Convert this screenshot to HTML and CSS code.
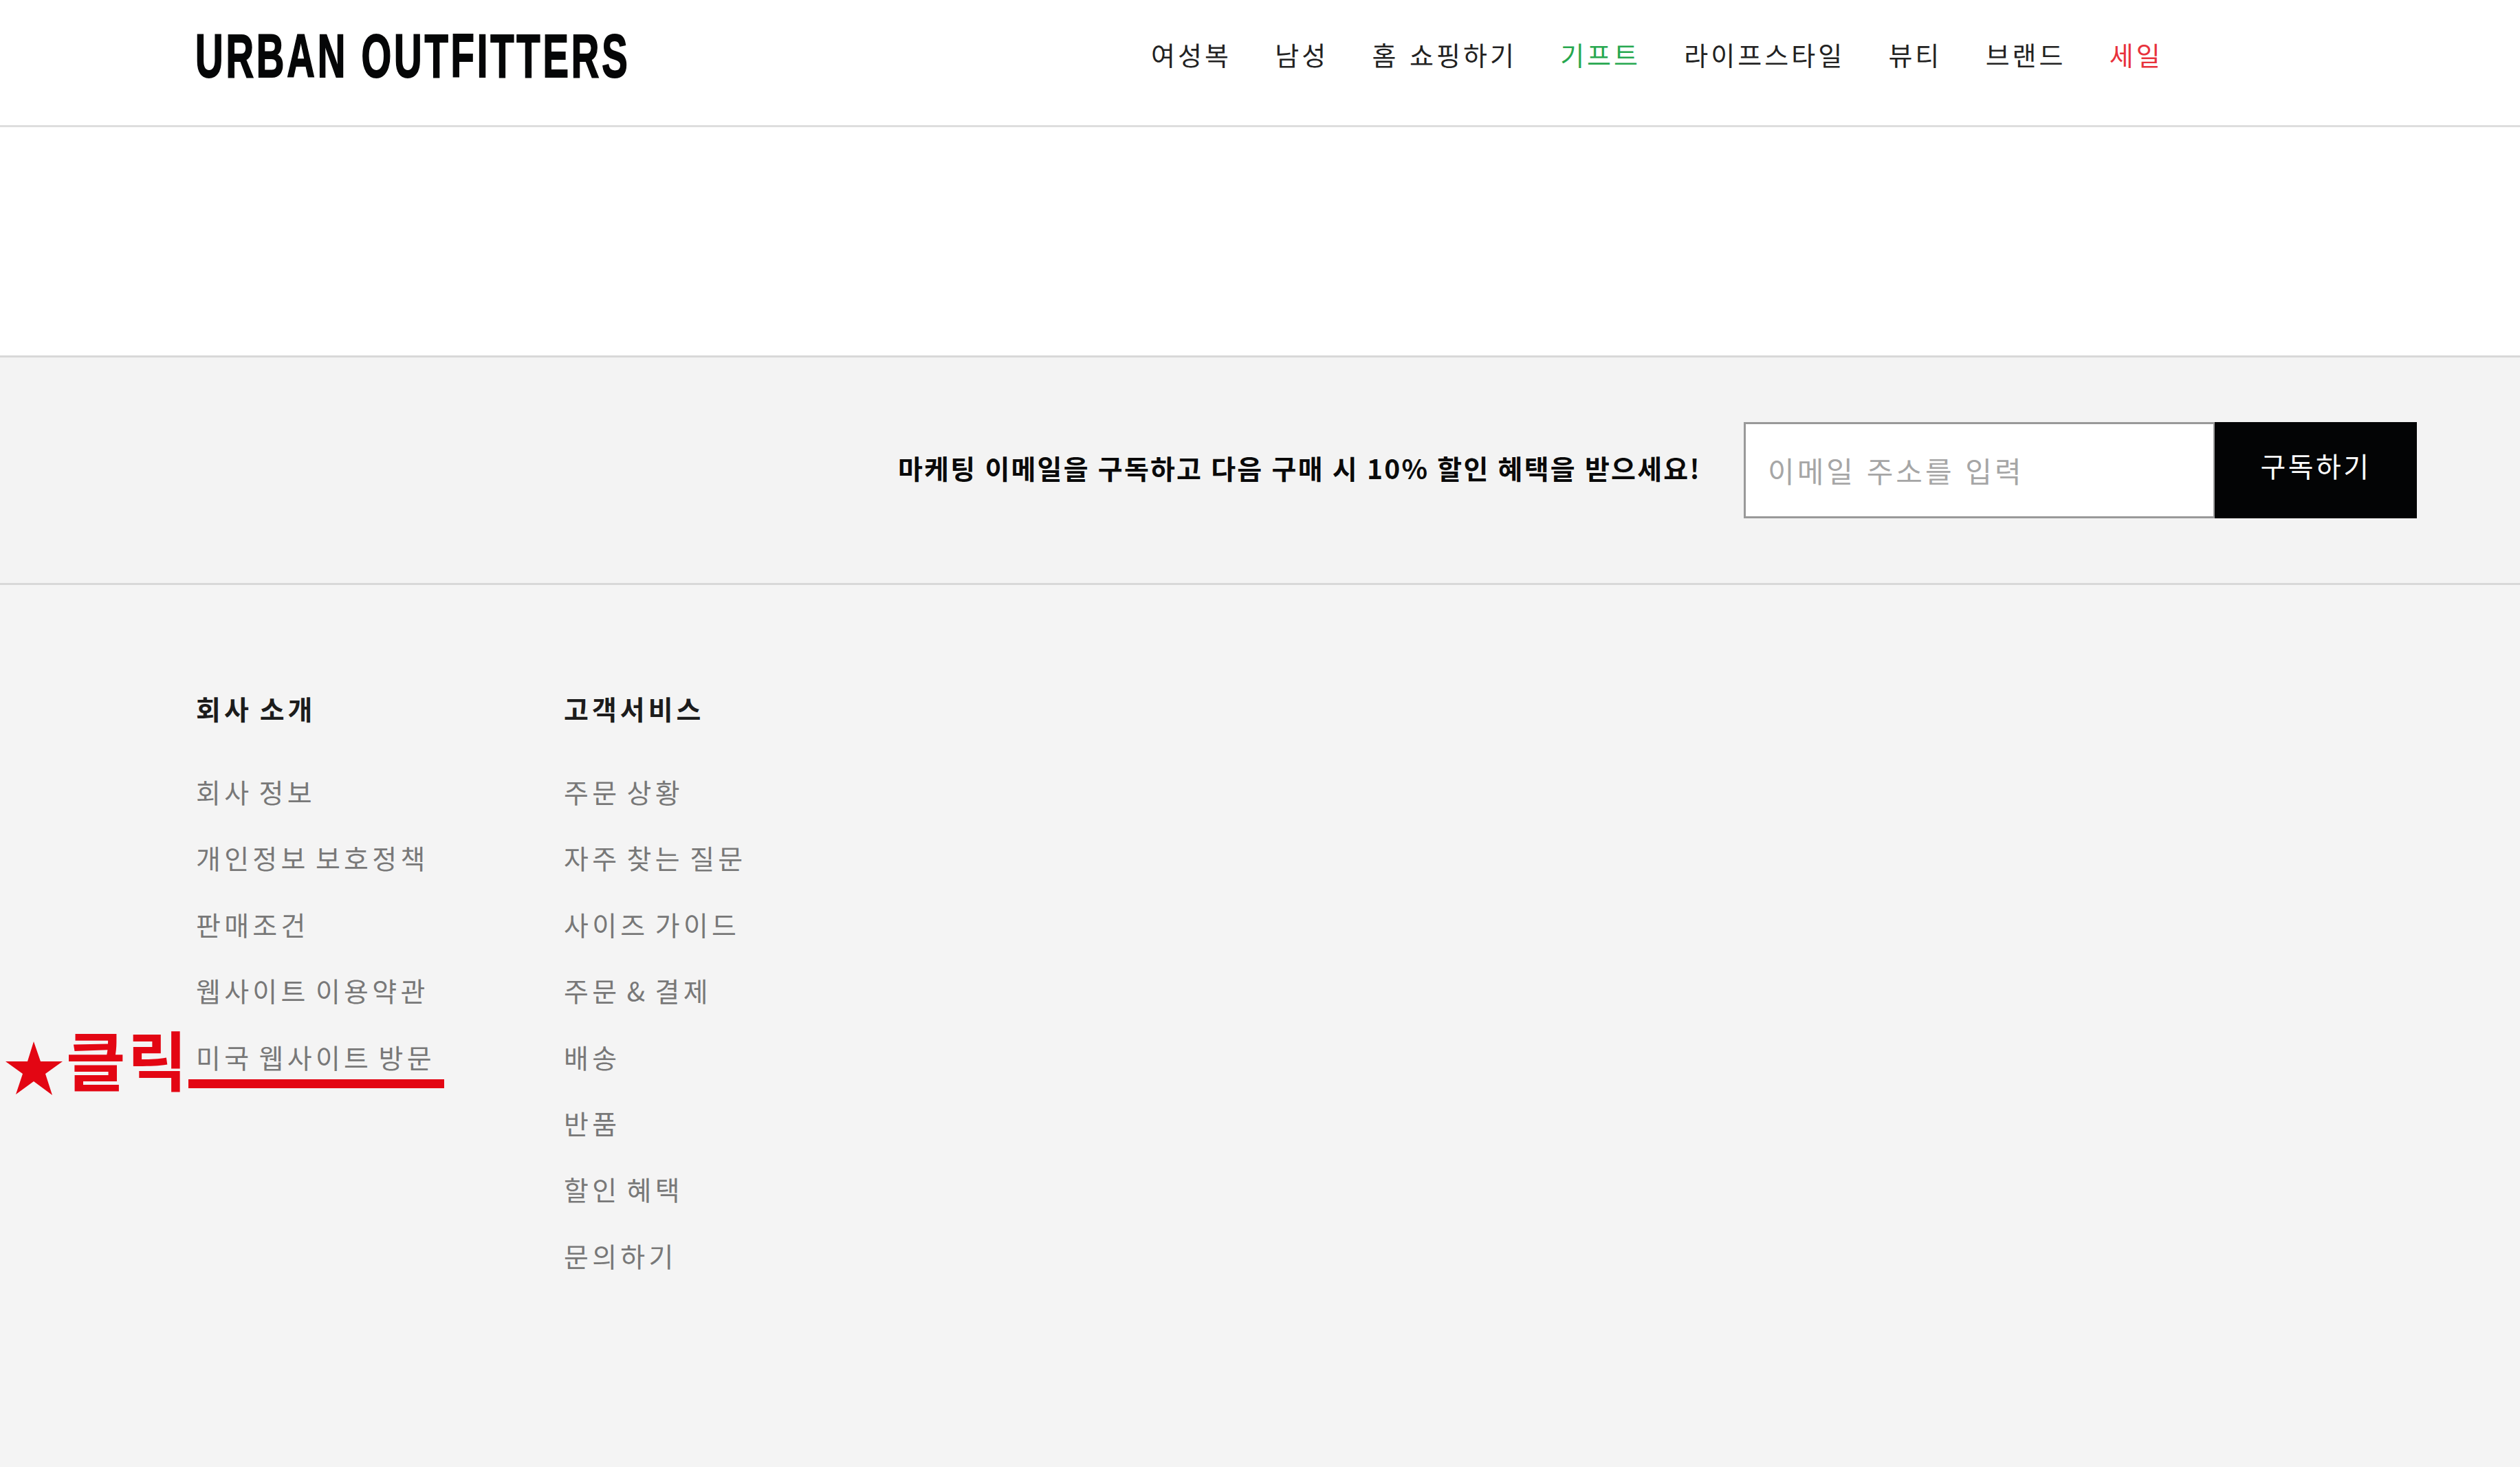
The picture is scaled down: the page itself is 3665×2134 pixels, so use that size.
FILE: index.html
```html
<!DOCTYPE html>
<html lang="ko">
<head>
  <meta charset="UTF-8" />
  <title>Urban Outfitters</title>
  <link rel="stylesheet" href="styles.css">
</head>
<body>
  <!-- Header -->
  <header class="site-header">
    <a class="logo" href="#"><span class="logo-text">URBAN OUTFITTERS</span></a>
    <nav class="nav">
      <a class="nav-link" href="#">여성복</a>
      <a class="nav-link" href="#">남성</a>
      <a class="nav-link" href="#">홈 쇼핑하기</a>
      <a class="nav-link nav-gift" href="#">기프트</a>
      <a class="nav-link" href="#">라이프스타일</a>
      <a class="nav-link" href="#">뷰티</a>
      <a class="nav-link" href="#">브랜드</a>
      <a class="nav-link nav-sale" href="#">세일</a>
    </nav>
  </header>

  <div class="blank-band"></div>

  <!-- Newsletter -->
  <section class="subscribe">
    <p class="subscribe-text">마케팅 이메일을 구독하고 다음 구매 시 10% 할인 혜택을 받으세요!</p>
    <form class="subscribe-form">
      <input class="subscribe-input" type="text" placeholder="이메일 주소를 입력" />
      <button class="subscribe-btn" type="button"><span class="subscribe-btn-label">구독하기</span></button>
    </form>
  </section>

  <!-- Footer -->
  <footer class="footer">
    <div class="footer-col">
      <h4 class="footer-title">회사 소개</h4>
      <ul class="footer-list">
        <li><a class="footer-link" href="#">회사 정보</a></li>
        <li><a class="footer-link" href="#">개인정보 보호정책</a></li>
        <li><a class="footer-link" href="#">판매조건</a></li>
        <li><a class="footer-link" href="#">웹사이트 이용약관</a></li>
        <li class="footer-marked">
          <a class="footer-link" href="#">미국 웹사이트 방문</a>
          <!-- annotation drawn on top of the screenshot -->
          <div class="click-note">
            <svg class="click-star" width="83" height="78" viewBox="0 0 83 78">
              <polygon points="41,0 51,29 83,29 58,47 68,78 41,58 15,77 25,47 0,29 32,29" />
            </svg>
            <span class="click-label">클릭</span>
          </div>
          <div class="click-line"></div>
        </li>
      </ul>
    </div>
    <div class="footer-col">
      <h4 class="footer-title">고객서비스</h4>
      <ul class="footer-list">
        <li><a class="footer-link" href="#">주문 상황</a></li>
        <li><a class="footer-link" href="#">자주 찾는 질문</a></li>
        <li><a class="footer-link" href="#">사이즈 가이드</a></li>
        <li><a class="footer-link" href="#">주문 &amp; 결제</a></li>
        <li><a class="footer-link" href="#">배송</a></li>
        <li><a class="footer-link" href="#">반품</a></li>
        <li><a class="footer-link" href="#">할인 혜택</a></li>
        <li><a class="footer-link" href="#">문의하기</a></li>
      </ul>
    </div>
  </footer>
</body>
</html>
```

FILE: styles.css
```css
body {
  margin: 0;
  min-height: 2134px;
  display: flex;
  flex-direction: column;
  background: #fff;
  font-family: "Noto Sans CJK KR", "Noto Sans", sans-serif;
}
a {
  text-decoration: none;
}
/* Header */
.site-header {
  height: 182px;
  display: flex;
  align-items: center;
  padding-left: 284px;
  border-bottom: 3px solid #dedede;
}
.logo {
  display: block;
  width: 627px;
  height: 90px;
  margin-top: -20px;
  color: #050607;
}
/* logo wordmark is a heavy condensed face, squeeze the bold sans to get there */
.logo-text {
  display: inline-block;
  font-family: "Liberation Sans", sans-serif;
  font-size: 89px;
  line-height: 90px;
  font-weight: 700;
  letter-spacing: 6px;
  white-space: nowrap;
  -webkit-text-stroke: 2px #050607;
  transform: scaleX(0.632);
  transform-origin: left center;
}
.nav {
  display: flex;
  gap: 63.3px;
  margin-left: 763px;
  margin-top: -24px;
}
.nav-link {
  font-size: 38px;
  line-height: 44px;
  letter-spacing: 4px;
  word-spacing: 1px;
  color: #222;
}
.nav-gift {
  color: #27a84f;
}
.nav-sale {
  color: #e8323c;
}
.blank-band {
  height: 332px;
}
/* Newsletter */
.subscribe {
  height: 328px;
  display: flex;
  align-items: center;
  justify-content: flex-end;
  gap: 62px;
  padding-right: 150px;
  background: #f3f3f3;
  border-top: 3px solid #d8d8d8;
  border-bottom: 3px solid #d8d8d8;
}
.subscribe-text {
  margin: -8px 0 0 0;
  font-size: 39px;
  line-height: 44px;
  font-weight: 700;
  letter-spacing: 2.2px;
  word-spacing: -1px;
  color: #0a0a0a;
}
.subscribe-form {
  display: flex;
}
.subscribe-input {
  width: 685px;
  height: 140px;
  box-sizing: border-box;
  padding: 0 32px 2px 32px;
  border: 3px solid #999;
  border-right-width: 2px;
  background: #fff;
  font-family: inherit;
  font-size: 42px;
  letter-spacing: 4px;
  outline: none;
}
.subscribe-input::placeholder {
  color: #a6a6a6;
}
.subscribe-btn {
  width: 294px;
  height: 140px;
  border: none;
  background: #030405;
  color: #fff;
  font-family: inherit;
  font-size: 40px;
  letter-spacing: 3.5px;
}
.subscribe-btn-label {
  display: block;
  margin-top: -14px;
}
/* Footer */
.footer {
  flex: 1;
  display: flex;
  gap: 235px;
  padding: 159px 0 0 285px;
  background: #f4f4f4;
}
.footer-col {
  width: 300px;
}
.footer-title {
  margin: 0 0 81px 0;
  font-size: 39px;
  line-height: 40px;
  font-weight: 700;
  letter-spacing: 5px;
  word-spacing: -5px;
  color: #1c1c1c;
}
.footer-list {
  list-style: none;
  margin: 0;
  padding: 0;
  display: flex;
  flex-direction: column;
  gap: 56.4px;
}
.footer-list li {
  height: 40px;
}
.footer-link {
  font-size: 39px;
  line-height: 40px;
  letter-spacing: 5.3px;
  word-spacing: -7px;
  color: #787878;
  white-space: nowrap;
}
.footer-marked {
  position: relative;
}
.click-note {
  position: absolute;
  left: -277px;
  top: -28px;
  display: flex;
  align-items: flex-start;
  gap: 5px;
}
.click-star {
  flex: none;
  margin-top: 26px;
}
.click-star polygon {
  fill: #e30613;
}
.click-label {
  font-size: 94px;
  line-height: 100px;
  font-weight: 700;
  letter-spacing: 3px;
  color: #e30613;
  white-space: nowrap;
}
.click-line {
  position: absolute;
  left: -11px;
  top: 53px;
  width: 372px;
  height: 13px;
  background: #e30613;
}
```
